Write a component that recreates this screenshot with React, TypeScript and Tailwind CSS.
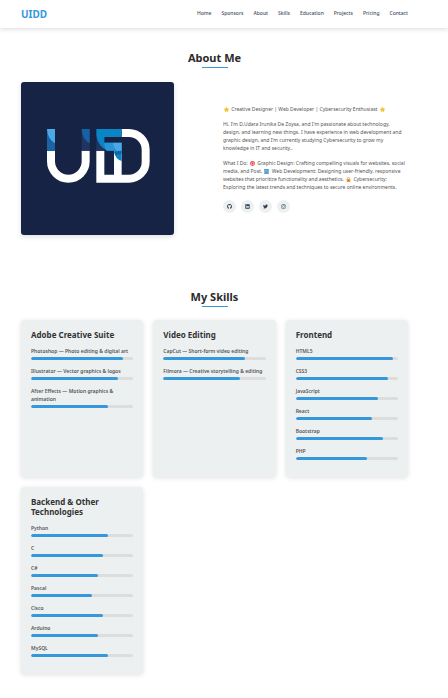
import type { ReactNode } from "react";
import { FaGithub, FaInstagram, FaLinkedin, FaTwitter } from "react-icons/fa";

const navItems = ["Home", "Sponsors", "About", "Skills", "Education", "Projects", "Pricing", "Contact"];

type Skill = { name: string; level: number };

const skillGroups: { title: string; skills: Skill[] }[] = [
  {
    title: "Adobe Creative Suite",
    skills: [
      { name: "Photoshop — Photo editing & digital art", level: 90 },
      { name: "Illustrator — Vector graphics & logos", level: 85 },
      { name: "After Effects — Motion graphics & animation", level: 75 },
    ],
  },
  {
    title: "Video Editing",
    skills: [
      { name: "CapCut — Short-form video editing", level: 80 },
      { name: "Filmora — Creative storytelling & editing", level: 75 },
    ],
  },
  {
    title: "Frontend",
    skills: [
      { name: "HTML5", level: 95 },
      { name: "CSS3", level: 90 },
      { name: "JavaScript", level: 80 },
      { name: "React", level: 75 },
      { name: "Bootstrap", level: 85 },
      { name: "PHP", level: 70 },
    ],
  },
  {
    title: "Backend & Other Technologies",
    skills: [
      { name: "Python", level: 75 },
      { name: "C", level: 70 },
      { name: "C#", level: 65 },
      { name: "Pascal", level: 60 },
      { name: "Cisco", level: 70 },
      { name: "Arduino", level: 65 },
      { name: "MySQL", level: 75 },
    ],
  },
];

const socials = [
  { label: "GitHub", icon: <FaGithub /> },
  { label: "LinkedIn", icon: <FaLinkedin /> },
  { label: "Twitter", icon: <FaTwitter /> },
  { label: "Instagram", icon: <FaInstagram /> },
];

function Glyph({ label, children }: { label: string; children: ReactNode }) {
  return (
    <svg viewBox="0 0 12 12" role="img" aria-label={label} className="mx-px inline-block size-[5px] align-middle">
      {children}
    </svg>
  );
}

function Star() {
  return (
    <Glyph label="Star">
      <path
        d="M6 1 7.6 4 11 4.6 8.8 7 9.2 10.5 6 9.5 2.8 10.5 3.2 7 1 4.6 4.4 4Z"
        fill="#f2c230"
        stroke="#f2c230"
        strokeWidth="2"
        strokeLinejoin="round"
      />
    </Glyph>
  );
}

function Target() {
  return (
    <Glyph label="Target">
      <circle cx="6" cy="6" r="5.8" fill="#e2474f" />
      <circle cx="6" cy="6" r="3.8" fill="#f6d5d5" />
      <circle cx="6" cy="6" r="2.2" fill="#dc3545" />
    </Glyph>
  );
}

function Laptop() {
  return (
    <Glyph label="Computer">
      <rect x="1" y="0" width="10" height="9" rx="1" fill="#2878bd" />
      <rect x="2" y="1" width="8" height="6" fill="#55b9f1" />
      <rect x="0" y="9" width="12" height="3" rx="1" fill="#8298ad" />
    </Glyph>
  );
}

function Lock() {
  return (
    <Glyph label="Lock">
      <path d="M3.5 6V3.5a2.5 2.5 0 0 1 5 0V6" fill="none" stroke="#c08a50" strokeWidth="1.5" />
      <rect x="1.5" y="4.5" width="9" height="7.5" rx="1" fill="#f29a38" />
      <rect x="5.2" y="7" width="1.6" height="3" fill="#a85a20" />
    </Glyph>
  );
}

function Portrait() {
  return (
    <svg
      viewBox="0 0 459 459"
      role="img"
      aria-label="UIDD logo"
      className="aspect-square w-full max-w-[153px] rounded-[3px] bg-[#172344] shadow-[0_2px_5px_rgba(0,0,0,0.12)]"
    >
      <path d="M90 206v32a52 52 0 0 0 104 0v-32" fill="none" stroke="#fff" strokeWidth="24" />
      <path d="M78 141h24v65H78z" fill="#1864a5" />
      <path d="M78 141h24v43q-22-13-24-43z" fill="#4baae6" />
      <path d="M182 141h24v65h-24z" fill="#203563" />
      <path d="M182 141h24v43q-22-10-24-43z" fill="#1762a4" />
      <path d="M302 153h22a50 50 0 0 1 50 50v37a50 50 0 0 1-50 50H238v-84" fill="none" stroke="#fff" strokeWidth="24" />
      <path d="M279 206h23v84h-23z" fill="#fff" />
      <path d="M226 165h24v41h-24z" fill="#203563" />
      <path d="M226 141h76v24h-52v20q-20-4-24-24z" fill="#0984c5" />
      <path d="M226 165q7 15 24 17h52v55q-20-6-23-31h-21q-26-15-32-41z" fill="#0984c5" />
      <path d="M250 182h26q2 15 12 24h-30q-8-5-8-24z" fill="#2795d8" />
      <path d="M276 182h26v24h-14q-11-9-12-24z" fill="#4baae6" />
      <path d="M280 210q12-1 22-4v9q-9 4-20 3z" fill="#1762a4" />
    </svg>
  );
}

function SectionTitle({ children }: { children: ReactNode }) {
  return (
    <h2 className="flex flex-col items-center gap-[2px] text-[11px] leading-[14px] font-bold text-[#2b2b2b]">
      {children}
      <span className="h-px w-[26px] bg-[#3498db]" />
    </h2>
  );
}

function SkillBar({ name, level }: Skill) {
  return (
    <li className="mb-[7px]">
      <p className="mb-[2px] text-[5px] leading-[8px] font-semibold text-[#555555]">{name}</p>
      <div className="h-[3px] overflow-hidden rounded-full bg-[#dddddd]">
        <div className="h-full rounded-full bg-[#3498db]" style={{ width: `${level}%` }} />
      </div>
    </li>
  );
}

export default function App() {
  return (
    <div className="min-h-screen bg-white pb-6 font-['Noto_Sans',sans-serif] text-[#333333]">
      <header className="flex h-7 items-center justify-between bg-white pr-10 pl-[21px] shadow-[0_1px_5px_rgba(0,0,0,0.15)]">
        <a href="#home" className="text-[10px] leading-[12px] font-bold text-[#3498db]">
          UIDD
        </a>
        <nav className="flex gap-[10px] pb-[2px] text-[5px] leading-[8px] font-medium text-[#3f4e5f]">
          {navItems.map((item) => (
            <a key={item} href={`#${item.toLowerCase()}`}>
              {item}
            </a>
          ))}
        </nav>
      </header>

      <main className="pr-10 pl-[21px]">
        <section id="about" className="pt-[23px]">
          <SectionTitle>About Me</SectionTitle>
          <div className="mt-[14px] grid grid-cols-2 items-center gap-[17px]">
            <Portrait />
            <div className="text-[5px] leading-[8px] text-[#555555]">
              <p className="mb-[7px]">
                <Star /> Creative Designer | Web Developer | Cybersecurity Enthusiast <Star />
              </p>
              <p className="mb-[7px]">
                Hi, I'm D.Udara Irunika De Zoysa, and I'm passionate about technology, design, and learning new
                things. I have experience in web development and graphic design, and I'm currently studying
                Cybersecurity to grow my knowledge in IT and security..
              </p>
              <p className="mb-[7px]">
                What I Do: <Target /> Graphic Design: Crafting compelling visuals for websites, social media, and
                Post. <Laptop /> Web Development: Designing user-friendly, responsive websites that prioritize
                functionality and aesthetics. <Lock /> Cybersecurity: Exploring the latest trends and techniques to
                secure online environments.
              </p>
              <div className="flex gap-[5px] pt-[2px]">
                {socials.map(({ label, icon }) => (
                  <a
                    key={label}
                    href={`#${label.toLowerCase()}`}
                    aria-label={label}
                    className="flex size-[13px] items-center justify-center rounded-full bg-[#ecf0f1] text-[#2c3e50]"
                  >
                    {icon}
                  </a>
                ))}
              </div>
            </div>
          </div>
        </section>

        <section id="skills" className="pt-[55px]">
          <SectionTitle>My Skills</SectionTitle>
          <div className="mt-[13px] grid grid-cols-3 gap-[10px]">
            {skillGroups.map(({ title, skills }) => (
              <article key={title} className="rounded-[4px] bg-[#ecf0f1] p-[10px] shadow-[0_1px_5px_rgba(0,0,0,0.12)]">
                <h3 className="mb-[7px] text-[8px] leading-[10px] font-bold text-[#333333]">{title}</h3>
                <ul>
                  {skills.map((skill) => (
                    <SkillBar key={skill.name} {...skill} />
                  ))}
                </ul>
              </article>
            ))}
          </div>
        </section>
      </main>
    </div>
  );
}
